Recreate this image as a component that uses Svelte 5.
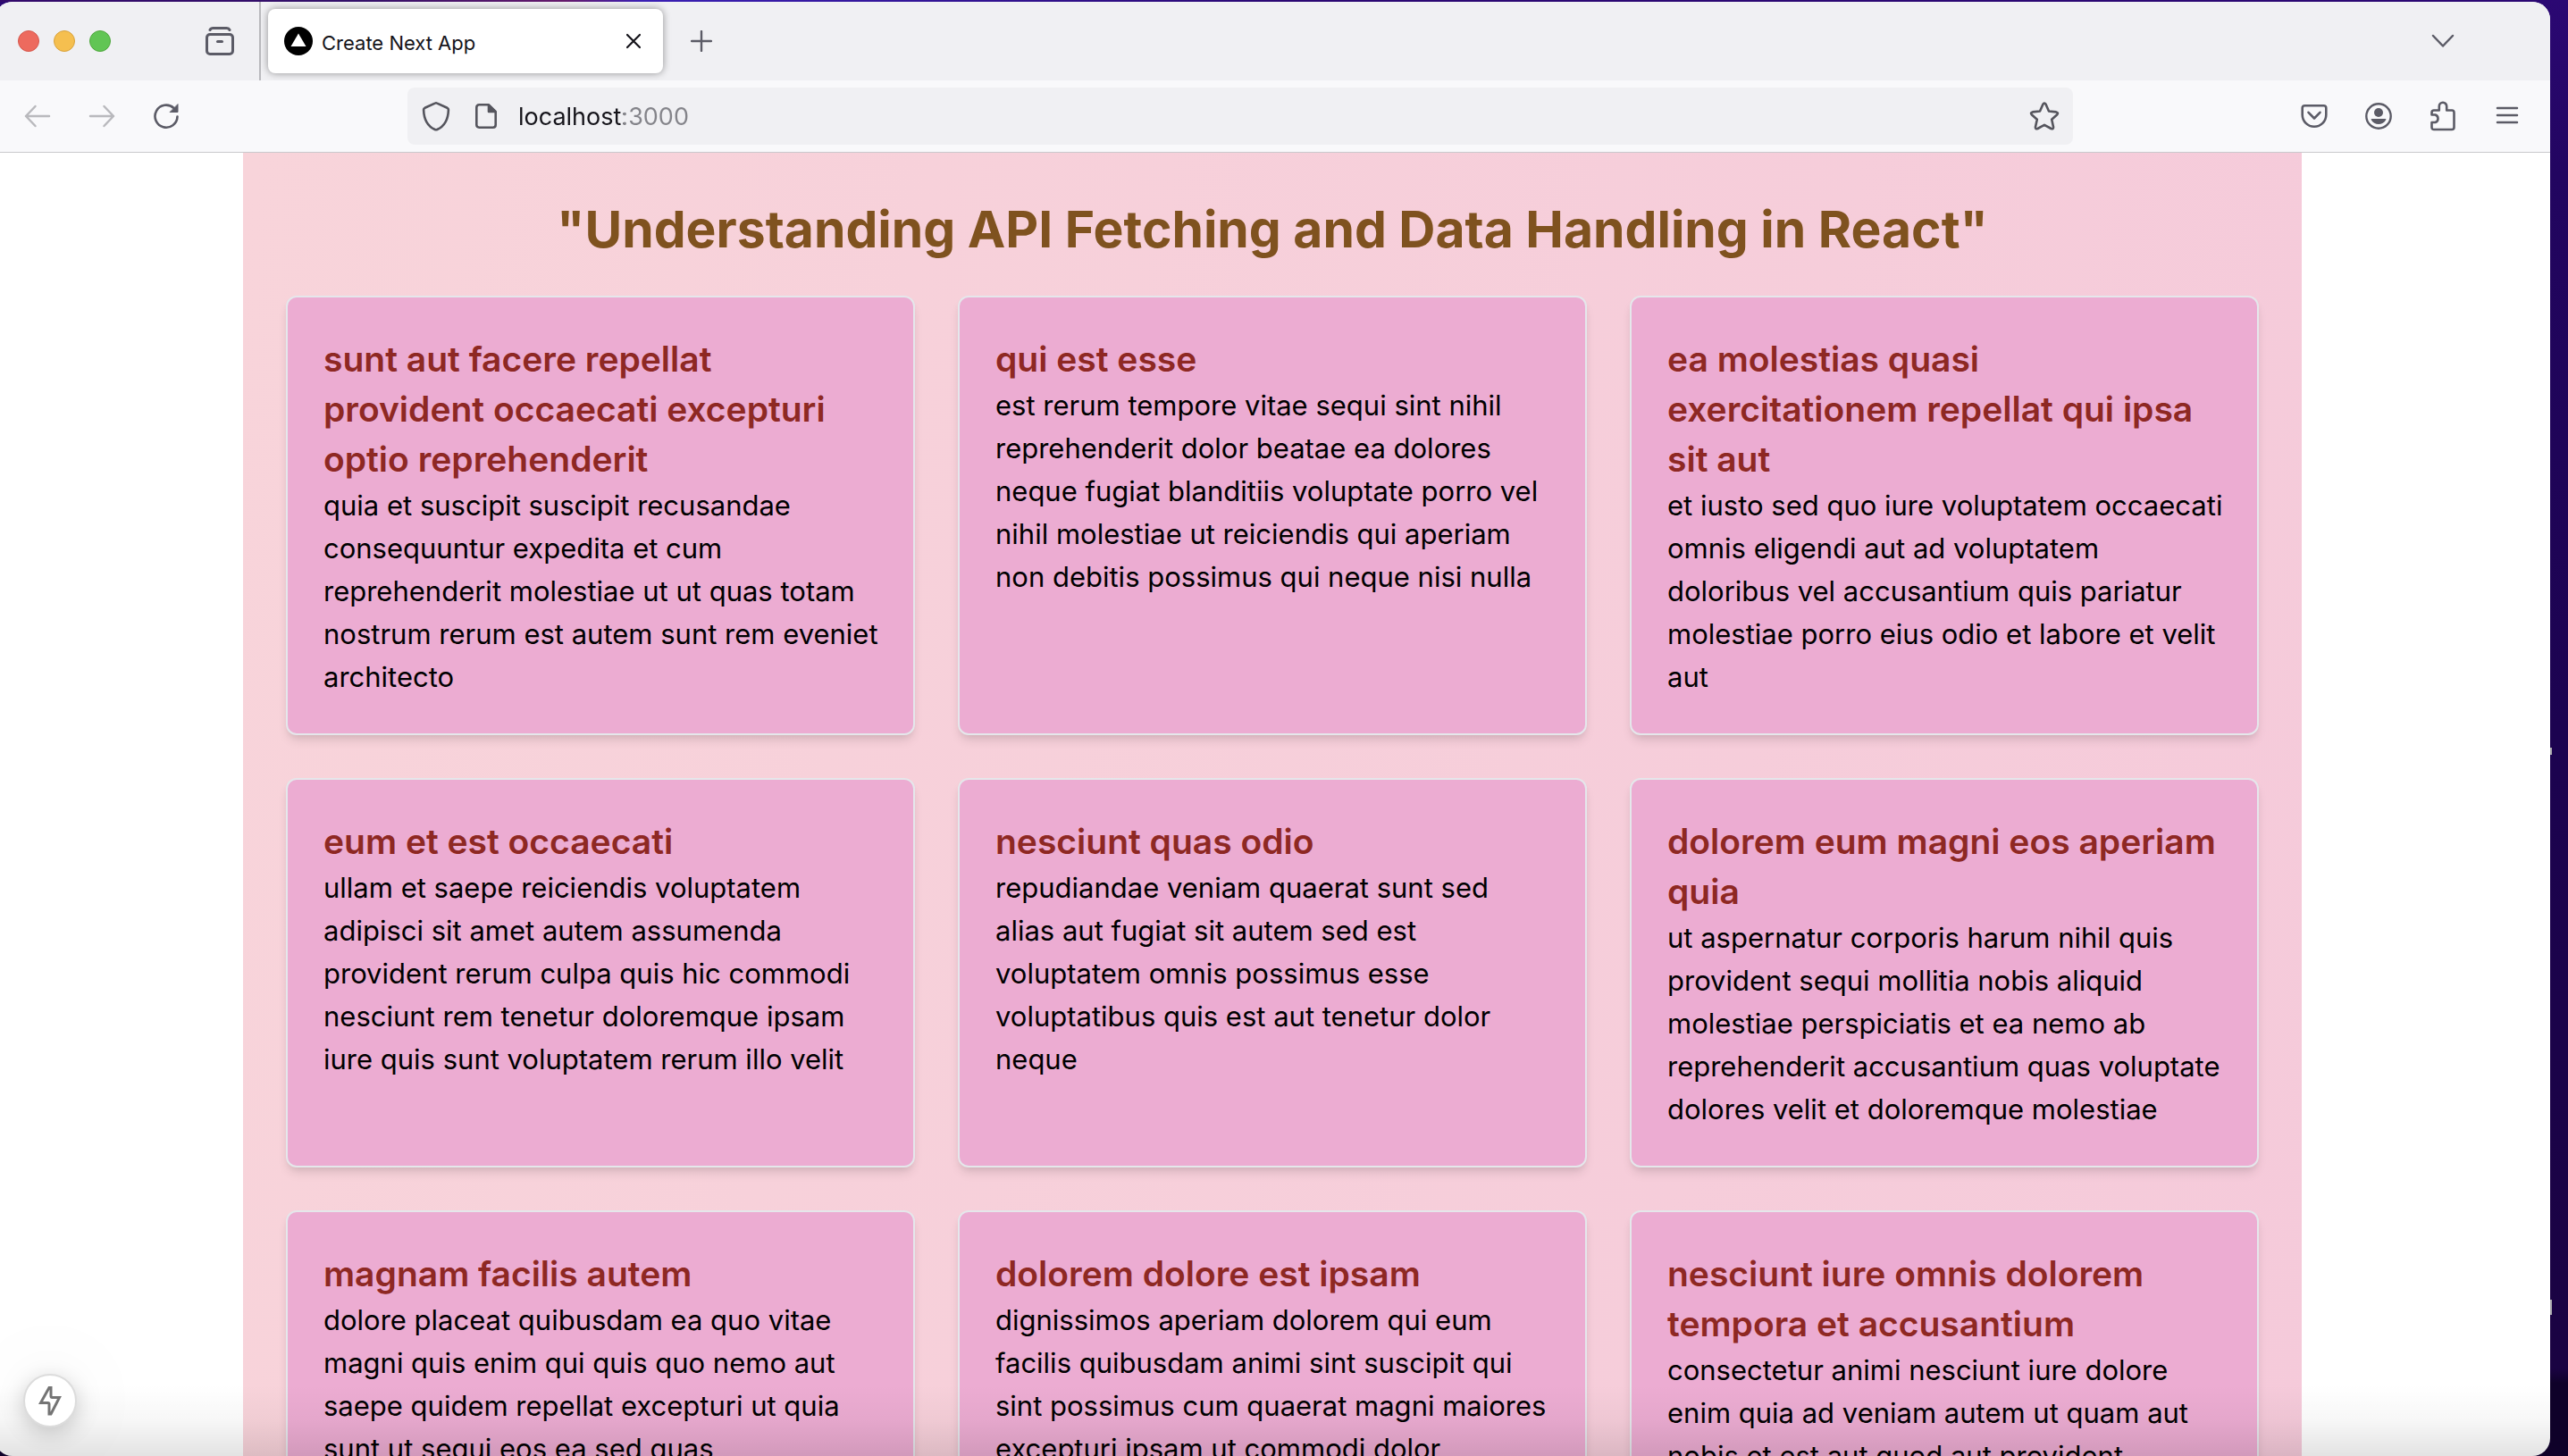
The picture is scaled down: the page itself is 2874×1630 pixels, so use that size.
<script>
  const posts = [
    {
      title: 'sunt aut facere repellat provident occaecati excepturi optio reprehenderit',
      body: 'quia et suscipit suscipit recusandae consequuntur expedita et cum reprehenderit molestiae ut ut quas totam nostrum rerum est autem sunt rem eveniet architecto'
    },
    {
      title: 'qui est esse',
      body: 'est rerum tempore vitae sequi sint nihil reprehenderit dolor beatae ea dolores neque fugiat blanditiis voluptate porro vel nihil molestiae ut reiciendis qui aperiam non debitis possimus qui neque nisi nulla'
    },
    {
      title: 'ea molestias quasi exercitationem repellat qui ipsa sit aut',
      body: 'et iusto sed quo iure voluptatem occaecati omnis eligendi aut ad voluptatem doloribus vel accusantium quis pariatur molestiae porro eius odio et labore et velit aut'
    },
    {
      title: 'eum et est occaecati',
      body: 'ullam et saepe reiciendis voluptatem adipisci sit amet autem assumenda provident rerum culpa quis hic commodi nesciunt rem tenetur doloremque ipsam iure quis sunt voluptatem rerum illo velit'
    },
    {
      title: 'nesciunt quas odio',
      body: 'repudiandae veniam quaerat sunt sed alias aut fugiat sit autem sed est voluptatem omnis possimus esse voluptatibus quis est aut tenetur dolor neque'
    },
    {
      title: 'dolorem eum magni eos aperiam quia',
      body: 'ut aspernatur corporis harum nihil quis provident sequi mollitia nobis aliquid molestiae perspiciatis et ea nemo ab reprehenderit accusantium quas voluptate dolores velit et doloremque molestiae'
    },
    {
      title: 'magnam facilis autem',
      body: 'dolore placeat quibusdam ea quo vitae magni quis enim qui quis quo nemo aut saepe quidem repellat excepturi ut quia sunt ut sequi eos ea sed quas'
    },
    {
      title: 'dolorem dolore est ipsam',
      body: 'dignissimos aperiam dolorem qui eum facilis quibusdam animi sint suscipit qui sint possimus cum quaerat magni maiores excepturi ipsam ut commodi dolor'
    },
    {
      title: 'nesciunt iure omnis dolorem tempora et accusantium',
      body: 'consectetur animi nesciunt iure dolore enim quia ad veniam autem ut quam aut nobis et est aut quod aut provident'
    }
  ];
</script>

<div class="desktop">
  <div class="window">
    <header class="tabbar">
      <div class="lights">
        <button class="light red" aria-label="Close window"></button>
        <button class="light yellow" aria-label="Minimize window"></button>
        <button class="light green" aria-label="Zoom window"></button>
      </div>
      <button class="icon view" aria-label="Recent browsing">
        <svg width="32" height="32" viewBox="0 0 32 32" fill="none" stroke="#5b5b66" stroke-width="3" stroke-linecap="round">
          <path d="M5 3.5Q6 1.5 8.500 1.500H23.500Q26 1.500 27 3.500" />
          <rect x="1.500" y="8.500" width="29" height="22" rx="3.500" />
          <path d="M13.500 16.500H18.500" />
        </svg>
      </button>
      <div class="tab">
        <svg width="32" height="32" viewBox="0 0 32 32"><circle cx="16" cy="16" r="16" fill="#000" /><path d="M16 7.500L24.500 22H7.500Z" fill="#fff" /></svg>
        <span class="tab-title">Create Next App</span>
        <button class="icon close" aria-label="Close tab">
          <svg width="18" height="18" viewBox="0 0 18 18" fill="none" stroke="#15141a" stroke-width="2.200" stroke-linecap="round"><path d="M2 2L16 16M16 2L2 16" /></svg>
        </button>
      </div>
      <button class="icon new-tab" aria-label="New tab">
        <svg width="24" height="24" viewBox="0 0 24 24" fill="none" stroke="#5b5b66" stroke-width="2.400" stroke-linecap="round"><path d="M12 1V23M1 12H23" /></svg>
      </button>
      <button class="icon all-tabs" aria-label="List all tabs">
        <svg width="26" height="16" viewBox="0 0 26 16" fill="none" stroke="#5b5b66" stroke-width="2.500" stroke-linecap="round" stroke-linejoin="round"><path d="M2 2L13 13.500L24 2" /></svg>
      </button>
    </header>

    <nav class="toolbar" aria-label="Navigation">
      <button class="icon" aria-label="Back" disabled>
        <svg width="30" height="26" viewBox="0 0 30 26" fill="none" stroke="#b9b9bd" stroke-width="2.500" stroke-linecap="round" stroke-linejoin="round"><path d="M28 13H2M12.500 2L2 13L12.500 24" /></svg>
      </button>
      <button class="icon" aria-label="Forward" disabled>
        <svg width="30" height="26" viewBox="0 0 30 26" fill="none" stroke="#b9b9bd" stroke-width="2.500" stroke-linecap="round" stroke-linejoin="round"><path d="M2 13H28M17.500 2L28 13L17.500 24" /></svg>
      </button>
      <button class="icon" aria-label="Reload">
        <svg width="30" height="30" viewBox="0 0 30 30" fill="none" stroke="#5b5b66" stroke-width="2.600" stroke-linecap="round"><path d="M27.500 15.500A12.500 12.500 0 1 1 23.500 6" /><path d="M28 2V10.500H19.500Z" fill="#5b5b66" stroke-width="1" stroke-linejoin="round" /></svg>
      </button>
      <div class="urlbar">
        <button class="icon" aria-label="Tracking protection">
          <svg width="32" height="34" viewBox="0 0 32 34" fill="none" stroke="#55555d" stroke-width="2.600" stroke-linejoin="round"><path d="M14.800 2.600Q16 2 17.200 2.600L28.500 7.800Q30 8.600 29.900 10C29.600 20.500 25 28.500 17.300 32Q16 32.600 14.700 32C7 28.500 2.400 20.500 2.100 10Q2 8.600 3.500 7.800Z" /></svg>
        </button>
        <button class="icon" aria-label="Site information">
          <svg width="24" height="28" viewBox="0 0 24 28" fill="none" stroke="#55555d" stroke-width="2.600" stroke-linejoin="round"><path d="M4.300 1.300H15L22.700 9V23.700Q22.700 26.700 19.700 26.700H4.300Q1.300 26.700 1.300 23.700V4.300Q1.300 1.300 4.300 1.300Z" /><path d="M15 2V9H22Z" fill="#55555d" /></svg>
        </button>
        <input class="address" type="text" aria-label="Address" value="localhost:3000" />
        <button class="icon" aria-label="Bookmark this page">
          <svg width="34" height="32" viewBox="0 0 34 32" fill="none" stroke="#55555d" stroke-width="2.600" stroke-linejoin="round"><path d="M15.400 2.800Q17 .3 18.600 2.800L22 10.500L30.200 11.400Q33 12 31.300 14.200L25.200 19.800L27 28Q27.300 31 24.500 30L17 25.800L9.500 30Q6.700 31 7 28L8.800 19.800L2.700 14.200Q1 12 3.800 11.400L12 10.500Z" /></svg>
        </button>
      </div>
      <button class="icon" aria-label="Save to Pocket">
        <svg width="30" height="28" viewBox="0 0 30 28" fill="none" stroke="#5b5b66" stroke-width="2.600" stroke-linecap="round" stroke-linejoin="round"><path d="M4.500 2.300H25.500Q28.300 2.300 28.300 5V12.500A13.300 13.300 0 0 1 1.700 12.500V5Q1.700 2.300 4.500 2.300Z" /><path d="M8.500 9.800L15 16.500L21.500 9.800" /></svg>
      </button>
      <button class="icon" aria-label="Account">
        <svg width="30" height="30" viewBox="0 0 30 30" fill="#5b5b66"><circle cx="15" cy="15" r="13.700" fill="none" stroke="#5b5b66" stroke-width="2.400" /><circle cx="15" cy="11" r="5" /><path d="M7.500 18H22.500Q23.800 18 23.300 19C21.500 22.200 18.500 24 15 24S8.500 22.200 6.700 19Q6.200 18 7.500 18Z" /></svg>
      </button>
      <button class="icon" aria-label="Extensions">
        <svg width="28" height="34" viewBox="0 0 28 34" fill="none" stroke="#5b5b66" stroke-width="2.600" stroke-linejoin="round"><path d="M4 10.500H9.800V6A4.200 4.200 0 0 1 18.200 6V10.500H24Q26.500 10.500 26.500 13V29.500Q26.500 32 24 32H4Q1.500 32 1.500 29.500V24H5.500A4.500 4.500 0 0 0 5.500 15.500H1.500V13Q1.500 10.500 4 10.500Z" /></svg>
      </button>
      <button class="icon" aria-label="Open application menu">
        <svg width="26" height="22" viewBox="0 0 26 22" fill="none" stroke="#5b5b66" stroke-width="2.500" stroke-linecap="round"><path d="M2 2H24M2 10H24M2 18H24" /></svg>
      </button>
    </nav>

    <div class="viewport">
      <main class="page">
        <h1>"Understanding API Fetching and Data Handling in React"</h1>
        <div class="grid">
          {#each posts as post}
            <article class="card">
              <h2>{post.title}</h2>
              <p>{post.body}</p>
            </article>
          {/each}
        </div>
      </main>
      <div class="shade"></div>
      <button class="badge" aria-label="Development indicator">
        <svg width="26" height="34" viewBox="0 0 26 34" fill="none" stroke="#747474" stroke-width="3"><path d="M12 2.500L2.500 19.500H10.500Q12 19.500 12 21V32H14L23.500 13.500H15.500Q14 13.500 14 12V2.500Z" /></svg>
      </button>
    </div>
  </div>
  <span class="edge upper"></span>
  <span class="edge lower"></span>
</div>

<style>
  :global(body) {
    margin: 0;
    font-family: Inter, "Liberation Sans", sans-serif;
  }
  .desktop {
    position: relative;
    box-sizing: border-box;
    height: 100vh;
    padding: 2px 20px 0 0;
    overflow: hidden;
    background:
      linear-gradient(90deg, #330a6b 0, #331069 14%, #651a6b 22%, #3a20b4 25%, #2b0873 50%, #2b0873 100%) 0 0 / 100% 2px no-repeat,
      linear-gradient(#2b0873 0, #220560 12%, #1c0350 50%, #1a0342 94%, #0f0129 95%);
  }
  .window {
    display: flex;
    flex-direction: column;
    height: 100%;
    margin-left: -6px;
    border-radius: 20px;
    overflow: hidden;
    background: #fff;
  }
  button {
    border: 0;
    padding: 0;
    background: none;
    font: inherit;
  }
  svg {
    display: block;
    flex: none;
  }
  .icon {
    display: flex;
    flex: none;
    align-items: center;
    justify-content: center;
    width: 72px;
    height: 64px;
  }
  .tabbar {
    display: flex;
    flex: none;
    align-items: center;
    height: 88px;
    background: #f0f0f3;
  }
  .lights {
    display: flex;
    gap: 16px;
    padding-left: 26px;
  }
  .light {
    width: 24px;
    height: 24px;
    border-radius: 50%;
  }
  .red {
    background: #ed6a5e;
    border: 1px solid #d5574c;
  }
  .yellow {
    background: #f5bf4f;
    border: 1px solid #d8a23d;
  }
  .green {
    background: #61c554;
    border: 1px solid #50a73e;
  }
  .view {
    box-sizing: content-box;
    width: 88px;
    height: 88px;
    margin-left: 78px;
    border-right: 2px solid #b9b9bd;
  }
  .tab {
    display: flex;
    align-items: center;
    box-sizing: border-box;
    width: 442px;
    height: 72px;
    margin-left: 8px;
    padding: 0 5px 0 18px;
    border-radius: 8px;
    background: #fff;
    box-shadow: 0 0 8px rgba(0, 0, 0, 0.4);
  }
  .tab-title {
    flex: 1;
    padding-top: 4px;
    padding-left: 10px;
    font-size: 22px;
    line-height: 28px;
    color: #15141a;
  }
  .close {
    width: 56px;
  }
  .new-tab {
    width: 64px;
    margin-left: 11px;
  }
  .all-tabs {
    margin-left: auto;
    margin-right: 84px;
  }
  .toolbar {
    display: flex;
    flex: none;
    align-items: center;
    height: 80px;
    padding: 0 12px;
    background: #f9f9fb;
    border-bottom: 1px solid #c9c9cc;
  }
  .urlbar {
    display: flex;
    flex: 1;
    align-items: center;
    min-width: 0;
    height: 64px;
    margin: 0 234px;
    padding: 0 4px;
    border-radius: 8px;
    box-sizing: border-box;
    background: #f0f0f3;
  }
  .urlbar .icon {
    width: 56px;
  }
  .address {
    flex: 1;
    min-width: 0;
    height: 40px;
    margin-left: 8px;
    padding: 2px 0 0;
    border: 0;
    outline: 0;
    font: 27px/40px Inter, "Liberation Sans", sans-serif;
    color: #15141a;
    background: linear-gradient(90deg, #15141a 118px, #84848a 118px);
    -webkit-background-clip: text;
    background-clip: text;
    -webkit-text-fill-color: transparent;
  }
  .viewport {
    position: relative;
    flex: 1;
    min-height: 0;
    padding-right: 6px;
    padding-left: 6px;
    overflow: hidden;
  }
  .page {
    box-sizing: border-box;
    max-width: 2304px;
    min-height: 100%;
    margin: 0 auto;
    padding: 50px 48px 48px;
    background: linear-gradient(100deg, #f8d4da, #f5cada);
  }
  h1 {
    margin: 0 0 38px;
    font-size: 57px;
    line-height: 72px;
    font-weight: 700;
    text-align: center;
    color: #7f521f;
  }
  .grid {
    display: grid;
    grid-template-columns: repeat(3, minmax(0, 1fr));
    gap: 48px;
  }
  .card {
    padding: 41px 36px 39px 40px;
    border: 2px solid #e5e7eb;
    border-radius: 12px;
    background: #ecacd2;
    box-shadow: 0 8px 12px -2px rgba(0, 0, 0, 0.1), 0 4px 8px -4px rgba(0, 0, 0, 0.1);
  }
  h2 {
    margin: 0;
    padding-right: 8px;
    font-size: 39px;
    line-height: 56px;
    font-weight: 600;
    color: #8e2823;
  }
  p {
    margin: 0;
    font-size: 31px;
    line-height: 48px;
    color: #000;
  }
  .shade {
    position: absolute;
    inset: auto 0 0 0;
    height: 80px;
    pointer-events: none;
    background: linear-gradient(rgba(0, 0, 0, 0), rgba(0, 0, 0, 0.03) 50%, rgba(0, 0, 0, 0.11));
  }
  .badge {
    position: absolute;
    left: 32px;
    bottom: 32px;
    display: flex;
    align-items: center;
    justify-content: center;
    width: 60px;
    height: 60px;
    border: 2px solid #dcdcdc;
    border-radius: 50%;
    background: #fff;
    box-shadow: 0 6px 24px rgba(0, 0, 0, 0.2), 0 0 100px rgba(0, 0, 0, 0.08);
  }
  .edge {
    position: absolute;
    right: 18px;
    width: 2px;
    background: #a9a9ad;
  }
  .upper {
    top: 837px;
    height: 8px;
  }
  .lower {
    top: 1455px;
    height: 17px;
  }
</style>
